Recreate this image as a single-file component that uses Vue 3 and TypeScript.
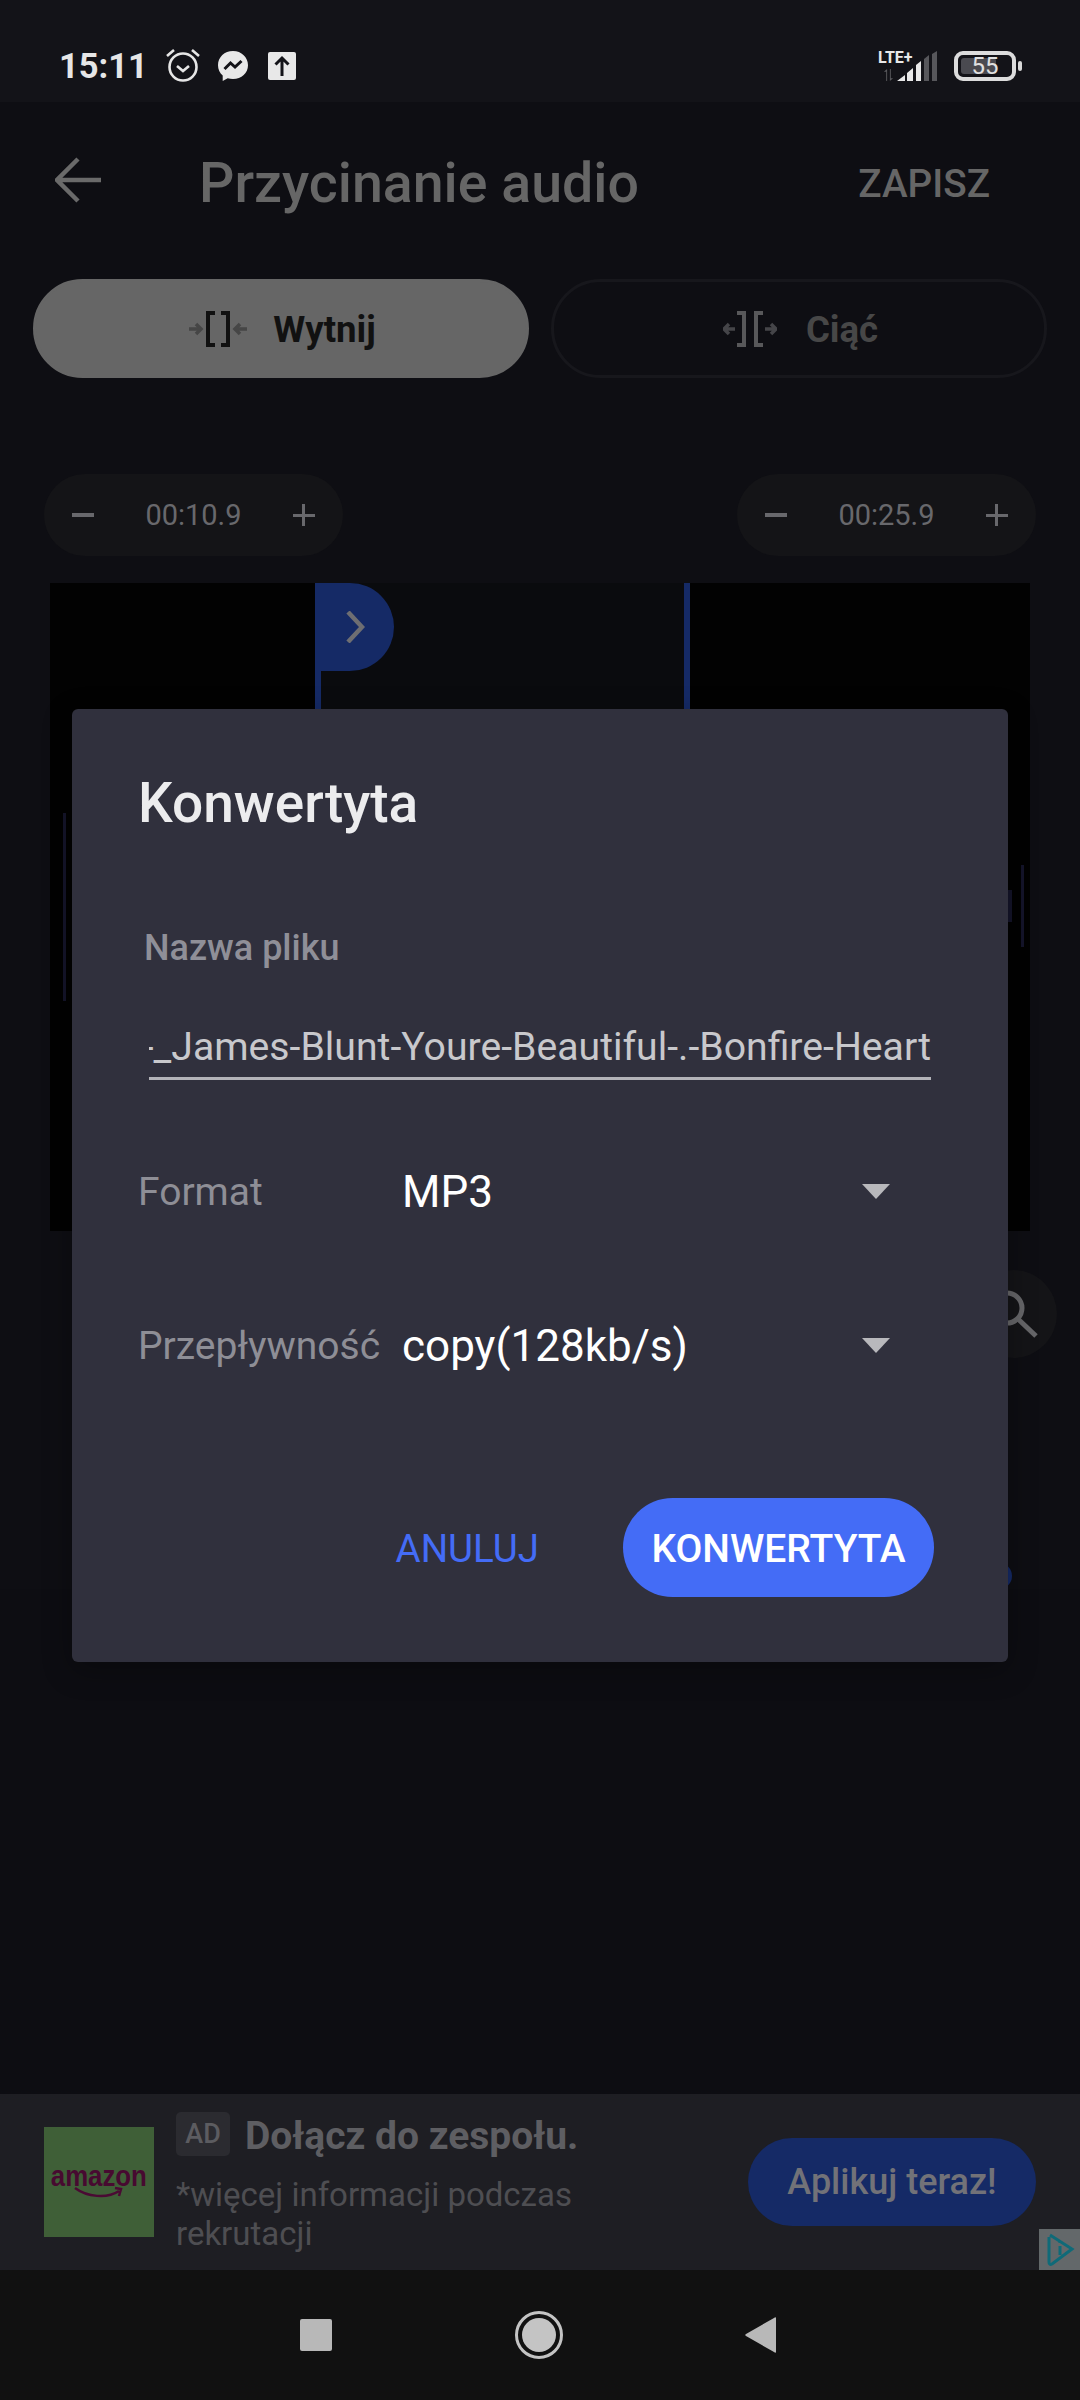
<script setup lang="ts">
interface Pill { id: string; time: string }
const pills: Pill[] = [
  { id: 'start', time: '00:10.9' },
  { id: 'end', time: '00:25.9' },
]
const rows = [
  { label: 'Format', value: 'MP3' },
  { label: 'Przepływność', value: 'copy(128kb/s)' },
]
</script>

<template>
  <div class="screen">
    <header class="status">
      <span class="clock">15:11</span>
      <svg class="ic-alarm" width="36" height="34" viewBox="0 0 36 34" fill="none" stroke="#e6e6e6">
        <circle cx="18" cy="19" r="13.5" stroke-width="2.6" />
        <path d="M12 18l6 5 6-5" stroke-width="2.6" />
        <path d="M2 8l7-6M34 8l-7-6" stroke-width="2.6" />
      </svg>
      <svg class="ic-msg" width="32" height="32" viewBox="0 0 32 32">
        <path fill="#e8e8e8" d="M16 1C7.500 1 1 7.100 1 15.200c0 4.300 1.800 7.900 4.700 10.400v5.400l5-2.800c1.600.5 3.400.8 5.300.8 8.500 0 15-6 15-13.800S24.500 1 16 1z" />
        <path fill="none" stroke="#131318" stroke-width="3" d="M7.500 19l6-6 4.500 4 6.500-6" />
      </svg>
      <svg class="ic-up" width="28" height="28" viewBox="0 0 28 28">
        <rect width="28" height="28" rx="2" fill="#e8e8e8" />
        <path fill="none" stroke="#131318" stroke-width="3" d="M14 24V6M7.500 12.500L14 6l6.500 6.500" />
      </svg>
      <span class="status-gap"></span>
      <div class="net">
        <span class="lte">LTE+</span>
        <svg class="arrows" width="15" height="13" viewBox="0 0 15 13" fill="#5a5a5d">
          <path d="M5 13V3H2.500L6 0v13zM9 0v13l3.500-3H10V0z" />
        </svg>
      </div>
      <svg class="bars" width="41" height="30" viewBox="0 0 41 30">
        <path fill="#e8e8e8" d="M0 30l8-6v6zM10 22l6-5v13h-6zM19 14l5-4v20h-5z" />
        <path fill="#57575b" d="M27 8l5-4v26h-5zM35 3l5-3v30h-5z" />
      </svg>
      <div class="battery">
        <span class="batt-fill"></span>
        <span class="batt-text">55</span>
      </div>
      <span class="batt-tip"></span>
    </header>

    <div class="appbar">
      <svg class="back" width="46" height="46" viewBox="0 0 46 46" fill="none" stroke="#6a6a6a" stroke-width="4.500">
        <path d="M46 23H3M23 2L2 23l21 21" />
      </svg>
      <h1 class="title">Przycinanie audio</h1>
      <span class="save">ZAPISZ</span>
    </div>

    <div class="modes">
      <button class="mode active">
        <svg width="58" height="36" viewBox="0 0 58 36" fill="none">
          <path stroke="#464646" stroke-width="3.500" d="M0 18h11M7 13l5 5-5 5M58 18H47M51 13l-5 5 5 5" />
          <path stroke="#111" stroke-width="4" d="M26 2h-7v32h7M32 2h7v32h-7" />
        </svg>
        <span>Wytnij</span>
      </button>
      <button class="mode">
        <svg width="54" height="36" viewBox="0 0 54 36" fill="none">
          <path stroke="#454549" stroke-width="3.500" d="M12 18H1M6 13l-5 5 5 5M42 18h11M48 13l5 5-5 5" />
          <path stroke="#58585a" stroke-width="4" d="M14 2h7v32h-7M40 2h-7v32h7" />
        </svg>
        <span>Ciąć</span>
      </button>
    </div>

    <div class="times">
      <div v-for="p in pills" :key="p.id" class="pill">
        <span class="minus"></span>
        <span class="time">{{ p.time }}</span>
        <span class="plus"></span>
      </div>
    </div>

    <div class="wave">
      <div class="side left"></div>
      <div class="mid">
        <span class="line first"></span>
        <span class="line second"></span>
        <div class="flag">
          <svg width="20" height="32" viewBox="0 0 20 32" fill="none" stroke="#6e6e72" stroke-width="4.500">
            <path d="M3 1l14 15L3 31" />
          </svg>
        </div>
      </div>
      <div class="side right"></div>
      <span class="tick t1"></span>
      <span class="tick t2"></span>
      <span class="tick t3"></span>
    </div>

    <div class="search-row">
      <div class="search">
        <svg width="60" height="60" viewBox="0 0 60 60" fill="none" stroke="#666669" stroke-width="5">
          <circle cx="24" cy="24" r="15" />
          <path d="M35 35l18 17" />
        </svg>
      </div>
    </div>

    <div class="knob-row"><span class="knob"></span></div>

    <div class="spacer"></div>

    <aside class="ad">
      <div class="ad-img">
        <span class="amazon">amazon</span>
        <svg class="smile" width="50" height="14" viewBox="0 0 50 14" fill="none" stroke="#4a0a33" stroke-width="2.500">
          <path d="M1 2c12 9 32 11 44 3M41 2l6 1-2 7" />
        </svg>
      </div>
      <div class="ad-copy">
        <div class="ad-head">
          <span class="ad-chip">AD</span>
          <span class="ad-title">Dołącz do zespołu.</span>
        </div>
        <p class="ad-sub">*więcej informacji podczas rekrutacji</p>
      </div>
      <button class="ad-cta">Aplikuj teraz!</button>
      <div class="adchoice">
        <svg width="30" height="34" viewBox="0 0 30 34" fill="none" stroke="#0f6a78" stroke-width="3">
          <path d="M5 2l22 14L7 31c-2 1-3 0-3-2V4" />
          <path d="M15 13v9M15 8v2" />
        </svg>
      </div>
    </aside>

    <nav class="navbar">
      <span class="nav-square"></span>
      <span class="nav-circle"><span></span></span>
      <svg width="31" height="36" viewBox="0 0 31 36"><path fill="#b8b8b8" d="M31 1v34c0 1-1 1-2 0L1 19c-1-.5-1-1.500 0-2L29 1c1-1 2-1 2 0z" /></svg>
    </nav>

    <div class="dialog">
      <h2 class="d-title">Konwertyta</h2>
      <div class="d-name">Nazwa pliku</div>
      <div class="d-input"><span>-_James-Blunt-Youre-Beautiful-.-Bonfire-Heart</span></div>
      <div v-for="(r, i) in rows" :key="r.label" class="d-row" :class="{ second: i === 1 }">
        <span class="d-label">{{ r.label }}</span>
        <span class="d-value">{{ r.value }}</span>
        <span class="d-caret"></span>
      </div>
      <div class="d-actions">
        <span class="d-cancel">ANULUJ</span>
        <button class="d-ok">KONWERTYTA</button>
      </div>
    </div>
  </div>
</template>

<style>
html, body { margin: 0; background: #0e0e13; }
</style>

<style scoped>
* { box-sizing: border-box; }
.screen {
  position: relative;
  width: 1080px;
  height: 2400px;
  overflow: hidden;
  display: flex;
  flex-direction: column;
  background: #0e0e13;
  font-family: Roboto, "Liberation Sans", sans-serif;
}
.status {
  height: 102px;
  flex: none;
  background: #131318;
  display: flex;
  align-items: center;
  padding: 30px 58px 0 59px;
  margin: 0;
}
.clock { font-size: 34.5px; font-weight: 700; color: #e6e6e6; width: 106px; }
.ic-alarm { margin-top: -2px; }
.ic-msg { margin-left: 16px; }
.ic-up { margin-left: 19px; }
.status-gap { flex: 1; }
.net { display: flex; flex-direction: column; width: 36px; height: 30px; margin-right: -17px; position: relative; top: 0; }
.lte { font-size: 16px; line-height: 13px; font-weight: 700; color: #e8e8e8; white-space: nowrap; }
.arrows { margin: 5px 0 0 3px; }
.bars { margin-left: 0; }
.battery {
  position: relative;
  width: 62px;
  height: 30px;
  margin-left: 16px;
  border: 4px solid #dcdcdc;
  border-radius: 9px;
  display: flex;
  align-items: center;
  justify-content: center;
}
.batt-fill { position: absolute; left: 3px; top: 3px; bottom: 3px; width: 35px; background: #4a4a50; border-radius: 3px; }
.batt-text { position: relative; font-size: 24px; color: #e0e0e0; line-height: 22px; }
.batt-tip { width: 4px; height: 10px; margin-left: 2px; background: #d8d8d8; border-radius: 2px; }

.appbar {
  height: 177px;
  flex: none;
  display: flex;
  align-items: center;
  padding: 0 90px 16px 55px;
}
.back { margin-top: -5px; }
.title { flex: 1; margin: 2px 0 0 98px; font-size: 55.5px; font-weight: 500; color: #666; white-space: nowrap; }
.save { margin-top: 2px; font-size: 38.7px; font-weight: 500; color: #666; }

.modes { display: flex; gap: 22px; padding: 0 33px; flex: none; }
.mode {
  flex: 1;
  height: 99px;
  border: 3px solid #17171c;
  border-radius: 50px;
  background: transparent;
  display: flex;
  align-items: center;
  justify-content: center;
  gap: 29px;
  font-family: inherit;
  font-size: 36.6px;
  font-weight: 700;
  color: #474747;
  padding: 1px 0 0 3px;
}
.mode.active { background: #666; border-color: #666; color: #111; gap: 26px; }

.times { display: flex; justify-content: space-between; margin-top: 96px; padding: 0 44px; flex: none; }
.pill {
  width: 299px;
  height: 82px;
  border-radius: 41px;
  background: #141417;
  display: flex;
  align-items: center;
  justify-content: space-between;
  padding: 0 28px;
}
.time { font-size: 29px; color: #68686c; }
.minus { width: 22px; height: 4px; background: #68686c; }
.plus { position: relative; width: 22px; height: 22px; background: linear-gradient(#68686c, #68686c) center / 22px 3px no-repeat, linear-gradient(#68686c, #68686c) center / 3px 22px no-repeat; }

.wave { position: relative; display: flex; margin: 27px 50px 0; height: 648px; flex: none; }
.side { background: #020202; }
.side.left { width: 265px; }
.side.right { flex: 1; }
.mid { position: relative; width: 375px; background: #0a0b0e; }
.line { position: absolute; top: 0; bottom: 0; width: 6px; background: #152a66; }
.line.first { left: 0; }
.line.second { right: 0; }
.flag {
  position: absolute;
  left: 0;
  top: 0;
  width: 79px;
  height: 88px;
  background: #152a66;
  border-radius: 0 44px 44px 0;
  display: flex;
  align-items: center;
  justify-content: center;
}
.tick { position: absolute; width: 3px; background: #14142a; }
.tick.t1 { left: 13px; top: 230px; height: 188px; }
.tick.t2 { right: 6px; top: 282px; height: 82px; }
.tick.t3 { right: 18px; top: 307px; height: 32px; width: 4px; }

.search-row { display: flex; justify-content: flex-end; margin-top: 39px; padding-right: 23px; flex: none; }
.search { width: 88px; height: 88px; border-radius: 50%; background: #141417; display: flex; align-items: center; justify-content: center; }
.knob-row { display: flex; justify-content: flex-end; margin-top: 205px; padding-right: 68px; flex: none; }
.knob { width: 30px; height: 26px; border-radius: 13px; background: #152a66; }
.spacer { flex: 1; background: #0d0d12; }

.ad { position: relative; height: 176px; flex: none; background: #1e1e23; display: flex; padding: 18px 44px 0; }
.ad-img {
  width: 110px;
  height: 110px;
  margin-top: 15px;
  flex: none;
  background: #3f5f37;
  display: flex;
  flex-direction: column;
  align-items: center;
  justify-content: center;
}
.amazon { font-family: "Liberation Sans", sans-serif; font-size: 30px; font-weight: 700; line-height: 22px; color: #470a30; transform: scaleX(0.86); }
.smile { margin-top: -1px; margin-left: 0; }
.ad-copy { width: 420px; margin-left: 22px; }
.ad-head { display: flex; align-items: flex-start; }
.ad-chip {
  width: 54px;
  height: 44px;
  border-radius: 5px;
  background: #2b2b30;
  color: #5c5c60;
  font-size: 27px;
  font-weight: 500;
  display: flex;
  align-items: center;
  justify-content: center;
}
.ad-title { margin-left: 15px; font-size: 39px; font-weight: 700; color: #5e5e62; line-height: 48px; white-space: nowrap; }
.ad-sub { margin: 15px 0 0; font-size: 33px; line-height: 39px; color: #4e4e52; }
.ad-cta {
  position: absolute;
  left: 748px;
  top: 44px;
  width: 288px;
  height: 88px;
  border: 0;
  border-radius: 44px;
  background: #152a66;
  color: #727278;
  font-family: inherit;
  font-size: 36px;
  font-weight: 500;
  padding: 0;
}
.adchoice {
  position: absolute;
  right: 0;
  bottom: 0;
  width: 41px;
  height: 41px;
  background: #63686a;
  display: flex;
  align-items: center;
  justify-content: center;
}
.navbar { height: 130px; flex: none; background: #111; position: relative; display: flex; align-items: center; padding-left: 300px; }
.nav-square { width: 32px; height: 32px; border-radius: 2px; background: #b8b8b8; }
.nav-circle {
  width: 48px;
  height: 48px;
  margin-left: 183px;
  margin-right: 182px;
  border-radius: 50%;
  border: 3px solid #c4c4c4;
  display: flex;
  align-items: center;
  justify-content: center;
}
.nav-circle span { width: 34px; height: 34px; border-radius: 50%; background: #c4c4c4; }

.dialog {
  position: absolute;
  left: 72px;
  top: 709px;
  width: 936px;
  height: 953px;
  padding: 64px 74px 0 66px;
  border-radius: 6px;
  background: #30303d;
  box-shadow: 0 8px 30px rgba(0, 0, 0, 0.3);
}
.d-title { margin: 0; font-size: 55px; line-height: 60px; font-weight: 500; color: #ececee; }
.d-name { margin: 95px 0 0 6px; font-size: 36px; line-height: 40px; font-weight: 500; color: #8f8f98; }
.d-input {
  margin: 42px 3px 0 11px;
  height: 70px;
  border-bottom: 3px solid #b3b3b8;
  overflow: hidden;
  display: flex;
  justify-content: flex-end;
  font-size: 39.2px;
  line-height: 74px;
  letter-spacing: 0;
  color: #c8c8cc;
  white-space: nowrap;
}
.d-input span { flex: none; }
.d-row { display: flex; align-items: center; height: 60px; margin-top: 82px; padding-right: 44px; }
.d-row.second { margin-top: 94px; }
.d-label { width: 264px; flex: none; font-size: 39px; color: #8e8e96; white-space: nowrap; }
.d-value { flex: 1; font-size: 44px; color: #fff; }
.d-caret { width: 0; height: 0; margin-top: -2px; border-left: 14px solid transparent; border-right: 14px solid transparent; border-top: 15px solid #b8b8bc; }
.d-actions { display: flex; align-items: center; justify-content: flex-end; gap: 84px; margin-top: 122px; }
.d-cancel { padding-top: 2px; font-size: 38.5px; color: #446cf6; }
.d-ok {
  width: 311px;
  height: 99px;
  border: 0;
  border-radius: 50px;
  background: #446cf6;
  color: #fff;
  font-family: inherit;
  font-size: 39px;
  font-weight: 500;
  padding: 2px 0 0;
}
</style>
